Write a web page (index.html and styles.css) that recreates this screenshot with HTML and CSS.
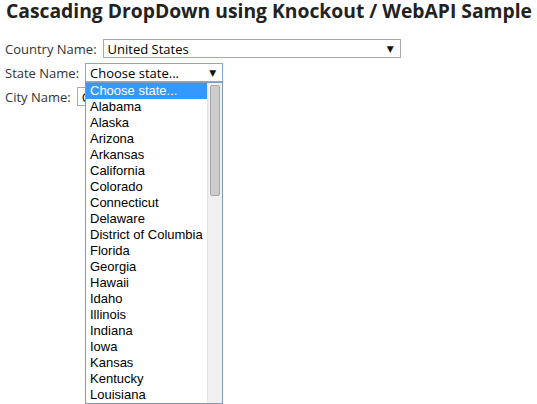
FILE: index.html
```html
<!DOCTYPE html>
<html>
<head>
<meta charset="utf-8">
<link rel="stylesheet" href="styles.css">
</head>
<body>
<h2 class="title">Cascading DropDown using Knockout / WebAPI Sample</h2>
<div class="form">
  <div class="row">
    <span class="label">Country Name:</span>
    <div class="select select-country"><span class="value">United States</span><span class="arrow">▼</span></div>
  </div>
  <div class="row">
    <span class="label">State Name:</span>
    <div class="select select-state focused"><span class="value">Choose state...</span><span class="arrow">▼</span></div>
  </div>
  <div class="row">
    <span class="label">City Name:</span>
    <div class="select select-city"><span class="value">Choose city...</span><span class="arrow">▼</span></div>
  </div>
</div>
<div class="listbox">
  <ul class="options">
    <li class="selected">Choose state...</li>
    <li>Alabama</li>
    <li>Alaska</li>
    <li>Arizona</li>
    <li>Arkansas</li>
    <li>California</li>
    <li>Colorado</li>
    <li>Connecticut</li>
    <li>Delaware</li>
    <li>District of Columbia</li>
    <li>Florida</li>
    <li>Georgia</li>
    <li>Hawaii</li>
    <li>Idaho</li>
    <li>Illinois</li>
    <li>Indiana</li>
    <li>Iowa</li>
    <li>Kansas</li>
    <li>Kentucky</li>
    <li>Louisiana</li>
  </ul>
  <div class="scrollbar"><div class="thumb"></div></div>
</div>
</body>
</html>
```
FILE: styles.css
```css
html, body {
  margin: 0;
  padding: 0;
  background: #ffffff;
}
body {
  font-family: "Open Sans", "Noto Sans", sans-serif;
  color: #222222;
  position: relative;
  width: 537px;
  height: 404px;
  overflow: hidden;
}
.title {
  margin: 0;
  padding: 0 0 0 6px;
  font-family: "Open Sans", sans-serif;
  font-weight: 700;
  font-size: 19.3px;
  line-height: 22px;
  color: #222222;
  white-space: nowrap;
}
.form {
  padding: 17px 0 0 5px;
  display: flex;
  flex-direction: column;
  gap: 5px;
}
.row {
  display: flex;
  align-items: center;
  gap: 6px;
  height: 19px;
  font-size: 13px;
  color: #333333;
}
.label {
  white-space: nowrap;
}
.label-country {
  letter-spacing: 0.2px;
}
.select {
  box-sizing: border-box;
  height: 19px;
  border: 1px solid #a9a9a9;
  background: #ffffff;
  display: flex;
  align-items: center;
  justify-content: space-between;
  padding: 0 6px 0 4px;
  font-size: 13px;
  color: #000;
}
.select-country { width: 298px; }
.select-state { width: 138px; }
.select-city { width: 120px; }
.focused { border-color: #7eaadc; }
.arrow {
  font-family: "DejaVu Sans", sans-serif;
  font-size: 9px;
  color: #111;
}
.listbox {
  position: absolute;
  left: 85px;
  top: 82px;
  width: 138px;
  height: 322px;
  box-sizing: border-box;
  border: 1px solid #7f9db9;
  background: #ffffff;
  display: flex;
}
.options {
  list-style: none;
  margin: 0;
  padding: 0;
  flex: 1;
  font-family: "Liberation Sans", Arial, sans-serif;
  font-size: 13px;
  color: #000;
}
.options li {
  height: 16px;
  line-height: 16px;
  padding-left: 4px;
  white-space: nowrap;
}
.options li.selected {
  background: #3399ff;
  color: #ffffff;
}
.scrollbar {
  width: 15px;
  background: #f0f0f0;
  border-left: 1px solid #e6e6e6;
  box-sizing: border-box;
  padding: 2px 2px 0 2px;
}
.thumb {
  height: 111px;
  background: #cdcdcd;
  border: 1px solid #a8a8a8;
  border-radius: 2px;
  box-sizing: border-box;
}
```
